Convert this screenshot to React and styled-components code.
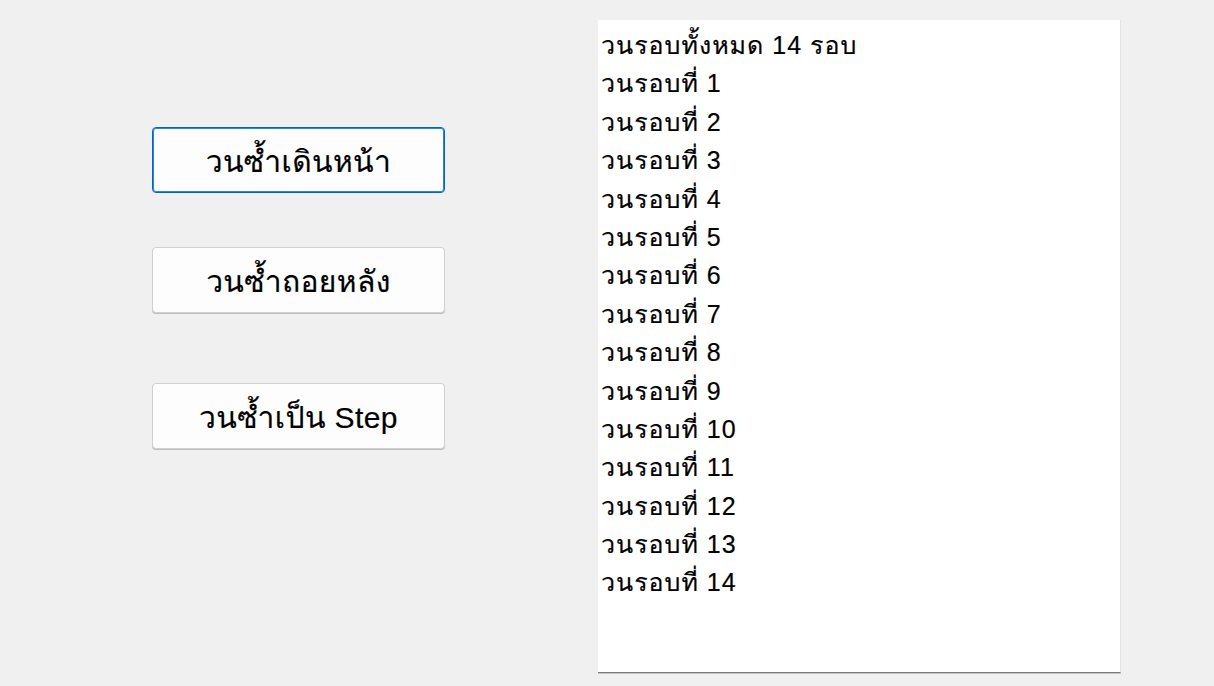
import React from "react";
import styled, { createGlobalStyle } from "styled-components";

const FONT = `"Liberation Sans", "Loma", "Noto Sans Thai Looped", sans-serif`;

const Global = createGlobalStyle`
  html, body { margin: 0; padding: 0; background: #f0f0f0; }
  body { font-family: ${FONT}; }
`;

const Window = styled.div`
  width: 1214px;
  height: 686px;
  background: #f0f0f0;
  display: flex;
  align-items: flex-start;
  box-sizing: border-box;
  padding-left: 152px;
  overflow: hidden;
`;

const ButtonColumn = styled.div`
  display: flex;
  flex-direction: column;
  width: 293px;
  padding-top: 127px;
`;

const Button = styled.button`
  box-sizing: border-box;
  width: 293px;
  height: 66px;
  margin-top: ${(p) => p.$gap || 0}px;
  background: #fdfdfd;
  border: 1px solid ${(p) => (p.$focused ? "#0067c0" : "#d0d0d0")};
  box-shadow: ${(p) => (p.$focused ? "inset 0 0 0 1px #2b88d8" : "0 1px 0 #bdbdbd")};
  border-radius: 4px;
  font-family: ${FONT};
  font-size: 30px;
  letter-spacing: 0.4px;
  color: #000;
  padding: 2px 0 0;
  display: flex;
  align-items: center;
  justify-content: center;
  cursor: default;
  -webkit-text-stroke: 0.2px #000;
`;

const ListBox = styled.div`
  box-sizing: border-box;
  margin-left: 153px;
  margin-top: 20px;
  width: 523px;
  height: 653px;
  background: #fff;
  border-right: 1px solid #e3e3e3;
  border-bottom: 1px solid #7a7a7a;
  box-shadow: 0 1px 0 #c4c4c4;
  padding: 6px 0 0 3px;
  overflow: hidden;
`;

const Item = styled.div`
  font-family: ${FONT};
  font-size: 25px;
  letter-spacing: 1px;
  line-height: 38.4px;
  height: 38.4px;
  color: #000;
  white-space: nowrap;
  -webkit-text-stroke: 0.2px #000;
`;

const items = ["วนรอบทั้งหมด 14 รอบ"].concat(
  Array.from({ length: 14 }, (_, i) => `วนรอบที่ ${i + 1}`)
);

export default function App() {
  return (
    <>
      <Global />
      <Window>
        <ButtonColumn>
          <Button $focused>วนซ้ำเดินหน้า</Button>
          <Button $gap={54}>วนซ้ำถอยหลัง</Button>
          <Button $gap={70}>วนซ้ำเป็น Step</Button>
        </ButtonColumn>
        <ListBox>
          {items.map((t) => (
            <Item key={t}>{t}</Item>
          ))}
        </ListBox>
      </Window>
    </>
  );
}
